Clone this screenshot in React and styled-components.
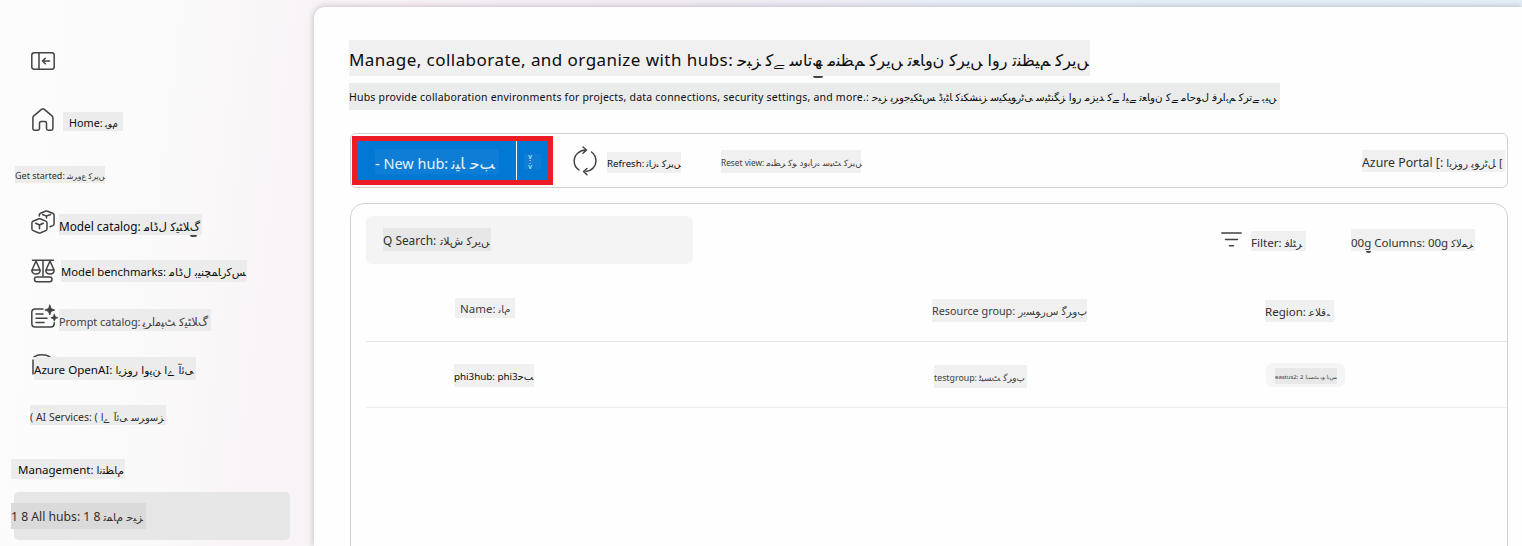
import React from "react";
import styled, { createGlobalStyle } from "styled-components";

const GlobalStyle = createGlobalStyle`
  * { box-sizing: border-box; }
  html, body { margin: 0; height: 546px; overflow: hidden; }
  body { font-family: "Noto Sans", "DejaVu Sans", sans-serif; color: #0c0c0c; }
`;

/* Contextual letter forms: isolated, final, initial, medial */
const FORMS = {
  "ا": "\uFE8D\uFE8E", "آ": "\uFE81\uFE82", "ب": "\uFE8F\uFE90\uFE91\uFE92",
  "پ": "\uFB56\uFB57\uFB58\uFB59", "ت": "\uFE95\uFE96\uFE97\uFE98",
  "ٹ": "\uFB66\uFB67\uFB68\uFB69", "ج": "\uFE9D\uFE9E\uFE9F\uFEA0",
  "چ": "\uFB7A\uFB7B\uFB7C\uFB7D", "ح": "\uFEA1\uFEA2\uFEA3\uFEA4",
  "د": "\uFEA9\uFEAA", "ڈ": "\uFB88\uFB89", "ر": "\uFEAD\uFEAE",
  "ز": "\uFEAF\uFEB0", "س": "\uFEB1\uFEB2\uFEB3\uFEB4",
  "ش": "\uFEB5\uFEB6\uFEB7\uFEB8", "ظ": "\uFEC5\uFEC6\uFEC7\uFEC8",
  "ع": "\uFEC9\uFECA\uFECB\uFECC", "ف": "\uFED1\uFED2\uFED3\uFED4",
  "ق": "\uFED5\uFED6\uFED7\uFED8", "ک": "\uFB8E\uFB8F\uFB90\uFB91",
  "گ": "\uFB92\uFB93\uFB94\uFB95", "ل": "\uFEDD\uFEDE\uFEDF\uFEE0",
  "م": "\uFEE1\uFEE2\uFEE3\uFEE4", "ن": "\uFEE5\uFEE6\uFEE7\uFEE8",
  "ں": "\uFB9E\uFB9F", "و": "\uFEED\uFEEE", "ہ": "\uFBA6\uFBA7\uFBA8\uFBA9",
  "ھ": "\uFBAA\uFBAB\uFBAC\uFBAD", "ی": "\uFBFC\uFBFD\uFBFE\uFBFF",
  "ئ": "\uFE89\uFE8A\uFE8B\uFE8C", "ے": "\uFBAE\uFBAF",
};

function shape(text) {
  let out = "";
  for (let i = 0; i < text.length; i++) {
    const f = FORMS[text[i]];
    if (!f) { out += text[i]; continue; }
    const prev = FORMS[text[i - 1]];
    const joined = !!prev && prev.length === 4;
    if (text[i] === "ل" && text[i + 1] === "ا") {
      out += joined ? "\uFEFC" : "\uFEFB";
      i++;
      continue;
    }
    const joinsNext = f.length === 4 && !!FORMS[text[i + 1]];
    out += f[joined ? (joinsNext ? 3 : 1) : joinsNext ? 2 : 0];
  }
  return out;
}

const Page = styled.div`
  display: flex;
  width: 1522px;
  height: 546px;
  overflow: hidden;
  background:
    linear-gradient(90deg, rgba(247, 240, 245, 0) 290px, #f7f0f5 420px, #f0ecf4 760px, #e6eff8 1000px, #e4eef8 100%) top / 100% 14px no-repeat,
    linear-gradient(97deg, #fcfcfc 0, #fbfbfb 130px, #faf8f9 230px, #f8f3f7 320px, #f8f3f7 100%);
`;
const Sidebar = styled.nav`
  flex: 0 0 314px;
  display: flex;
  flex-direction: column;
  align-items: flex-start;
`;
const NavRow = styled.div`
  display: flex;
  align-items: flex-start;
  flex: 0 0 auto;
  height: ${(p) => p.$h}px;
  padding-left: ${(p) => p.$x}px;
`;
const ActiveRow = styled.div`
  display: flex;
  align-items: flex-start;
  width: 276px;
  height: 48px;
  margin-left: 14px;
  padding-top: 11px;
  border-radius: 5px;
  background: #e6e6e6;
`;
const Main = styled.main`
  flex: 1;
  margin-top: 7px;
  padding: 33px 14px 0 35px;
  border-radius: 11px 0 0 0;
  background: #fefefe;
  box-shadow: 0 0 6px rgba(60, 40, 60, 0.3);
`;
const Box = styled.span`
  position: relative;
  display: flex;
  flex: 0 0 auto;
  align-items: baseline;
  width: ${(p) => p.$w}px;
  height: ${(p) => p.$h}px;
  margin-top: ${(p) => p.$mt || 0}px;
  margin-left: ${(p) => p.$ml || 0}px;
  padding-left: ${(p) => p.$pl || 0}px;
  line-height: ${(p) => p.$lh || p.$h}px;
  white-space: pre;
  color: ${(p) => p.$color || "#0c0c0c"};
  background: ${(p) => p.$bg || "#ececec"};
`;
const Latin = styled.span`
  font-size: ${(p) => p.$size}px;
  letter-spacing: ${(p) => p.$ls || 0}px;
`;
const Urdu = styled.bdo`
  margin-left: ${(p) => p.$gap ?? 3}px;
  font-family: "DejaVu Sans", sans-serif;
  font-size: ${(p) => p.$size}px;
`;
/* Dark sliver of an icon or glyph showing under a label's edge */
const Sliver = styled.i`
  position: absolute;
  left: ${(p) => p.$x}px;
  bottom: -2px;
  width: ${(p) => p.$w}px;
  height: 2px;
  border-radius: 0 0 5px 5px;
  background: #444;
`;
function Label({ en, ur, size, us, ls, gap, sliver, ...box }) {
  return (
    <Box {...box}>
      <Latin $size={size} $ls={ls}>{en}</Latin>
      {ur && <Urdu dir="ltr" lang="ur" $size={us} $gap={gap}>{shape(ur)}</Urdu>}
      {sliver && <Sliver $x={sliver[0]} $w={sliver[1]} />}
    </Box>
  );
}
const Title = styled.h1`
  margin: 0;
  height: 43px;
  font-weight: 400;
`;
const Subtitle = styled.p`
  margin: 0;
  height: 50px;
`;
const Toolbar = styled.div`
  display: flex;
  align-items: flex-start;
  width: 1158px;
  height: 55px;
  margin-left: 1px;
  padding: 2px 0 0 1px;
  border: 1px solid #d1d1d1;
  border-radius: 6px;
`;
const SplitButton = styled.div`
  display: flex;
  width: 201px;
  height: 49px;
  border: 5px solid #ed1c24;
  background: #0078d4;
`;
const ButtonMain = styled.div`
  width: 160px;
  padding: 8px 0 0 18px;
  border-right: 1px solid #fff;
`;
const ButtonMenu = styled.div`
  display: flex;
  flex: 1;
  padding: 13px 0 0 7px;
`;
const MenuMark = styled.div`
  display: flex;
  flex-direction: column;
  align-items: center;
  width: 17px;
  height: 15px;
  font-size: 7px;
  line-height: 5px;
  padding-right: 5px;
  color: #e4f1fb;
  background: #0e7dd6;
`;
const Panel = styled.section`
  width: 1158px;
  height: 380px;
  margin: 15px 0 0 1px;
  padding: 12px 0 0 15px;
  border: 1px solid #d1d1d1;
  border-radius: 14px;
`;
const PanelTools = styled.div`
  display: flex;
  height: 66px;
`;
const SearchField = styled.div`
  width: 327px;
  height: 48px;
  padding: 12px 0 0 17px;
  border-radius: 6px;
  background: #f4f4f4;
`;
const TableRow = styled.div`
  display: grid;
  grid-template-columns: 566px 333px 1fr;
  height: ${(p) => p.$h}px;
  border-bottom: 1px solid ${(p) => p.$line};
`;
const Pill = styled.div`
  width: 79px;
  height: 24px;
  margin: 21px 0 0 1px;
  padding: 5px 0 0 9px;
  border-radius: 7px;
  background: #f5f5f5;
`;
const Icon = styled.svg`
  flex: 0 0 auto;
  display: block;
  overflow: visible;
  margin-top: ${(p) => p.$mt || 0}px;
  margin-left: ${(p) => p.$ml || 0}px;
  fill: none;
  stroke: #424242;
  stroke-width: 1.5;
  stroke-linecap: round;
  stroke-linejoin: round;
`;

export default function App() {
  return (
    <>
      <GlobalStyle />
      <Page>
        <Sidebar>
          <NavRow $h={108} $x={31}>
            <Icon $mt={52} width="24" height="18" viewBox="0 0 24 18">
              <rect x="0.8" y="0.8" width="22.4" height="16.4" rx="2.4" />
              <path d="M8 1v16M18.5 9h-7M14.3 6.2L11.5 9l2.8 2.8" />
            </Icon>
          </NavRow>
          <NavRow $h={58} $x={32}>
            <Icon width="22" height="23" viewBox="0 0 22 23">
              <path d="M.9 9.8c0-.8.3-1.4.9-1.9l8-6.8c.7-.5 1.500-.5 2.200 0l8 6.800c.6.5.9 1.100.9 1.900v10.700c0 1-.7 1.700-1.700 1.700h-3c-1 0-1.700-.7-1.700-1.700v-5.200c0-1-.7-1.700-1.700-1.700H9.200c-1 0-1.700.7-1.700 1.700v5.200c0 1-.7 1.700-1.700 1.700h-3.200c-1 0-1.700-.7-1.700-1.700z" />
            </Icon>
            <Label en="Home:" ur="ہوم" size={10.8} us={9} gap={2} $w={60} $h={19} $mt={4} $ml={9} $pl={6} $lh={21} />
          </NavRow>
          <NavRow $h={44} $x={15}>
            <Label en="Get started:" ur="شروع کریں" size={9} us={7.8} gap={2} $w={90} $h={17} $lh={19} $color="#303030" />
          </NavRow>
          <NavRow $h={49} $x={31}>
            <Icon width="24" height="24" viewBox="0 0 24 24">
              <path d="M8.300 6V5c0-.9.4-1.400 1.200-1.700l4.800-2c.8-.3 1.500-.3 2.300 0l5 2c.9.4 1.500 1 1.500 1.900v8.600c0 .9-.5 1.500-1.300 1.800l-2.800 1.200M11.500 4.500l4 1.600 4-1.600M15.500 6.100V8M2 11.200l5.300-2.200c.8-.3 1.600-.3 2.400 0l5 2.100c.8.4 1.300.9 1.300 1.800v5.900c0 .9-.4 1.500-1.200 1.800l-5.100 2.200c-.8.300-1.600.3-2.400 0l-5.200-2.200C1.300 20.300.9 19.700.9 18.800v-5.900c0-.8.4-1.400 1.100-1.700zM4.700 13.300l3.800 1.700 3.800-1.700M8.500 15v3.800" />
            </Icon>
            <Label en="Model catalog:" ur="ماڈل کیٹلاگ" size={11.800} us={11.5} $w={143} $h={21} $mt={4} $ml={4} $lh={24} sliver={[131, 7]} />
          </NavRow>
          <NavRow $h={46} $x={31}>
            <Icon width="24" height="24" viewBox="0 0 24 24">
              <path d="M1.500 1.200h21M12 1.200V17M5 2L1 11M5 2l4 9M19 2l-4 9M19 2l4 9M.8 11h8.400c0 2.500-1.800 4-4.200 4S.8 13.500.8 11zM14.800 11h8.400c0 2.500-1.800 4-4.200 4s-4.200-1.500-4.200-4z" />
              <rect x="3.500" y="18" width="17.500" height="4.800" rx="2.200" />
            </Icon>
            <Label en="Model benchmarks:" ur="ماڈل بینچمارکس" size={11.300} us={11} $w={186} $h={22} $mt={1} $ml={6} $lh={24} />
          </NavRow>
          <NavRow $h={49} $x={31}>
            <Icon width="26" height="23" viewBox="0 0 26 23">
              <path d="M12 4H4C2 4 .8 5.300.8 7.200v11C.8 20.700 2 22 4 22h16c2 0 3.200-1.300 3.200-3.200v-1M5 9h7M5 13.200h11M5 17.400h8" />
              <path fill="#424242" strokeWidth="0.800" d="M18.800 0l1.400 3.600 3.600 1.400-3.600 1.400-1.400 3.600-1.400-3.600L13.800 5l3.600-1.400zM23.300 9.200l1 2.500 2.500 1-2.500 1-1 2.500-1-2.500-2.500-1 2.500-1z" />
            </Icon>
            <Label en="Prompt catalog:" ur="پرامپٹ کیٹلاگ" size={10.900} us={11.3} gap={2} $w={152} $h={22} $mt={4} $ml={2} $lh={26} $color="#404040" />
          </NavRow>
          <NavRow $h={51} $x={32}>
            <Icon width="22" height="22" viewBox="0 0 22 22">
              <path d="M1 20V6M2 2.800C4 1.500 6 .8 9.500.8S16 1.500 18 2.800" />
            </Icon>
            <Label en="Azure OpenAI:" ur="ایزور اوپن اے آئی" size={11.600} us={10.800} $w={162} $h={23} $mt={3} $ml={-20} $pl={0} $lh={25} />
          </NavRow>
          <NavRow $h={54} $x={30}>
            <Label en="( AI Services: (" ur="اے آئی سروسز" size={10.500} us={10.1} $w={136} $h={20} $lh={24} $color="#303030" />
          </NavRow>
          <NavRow $h={33} $x={11}>
            <Label en="Management:" ur="انتظام" size={11.500} us={10.500} $w={114} $h={20} $pl={7} $lh={21} />
          </NavRow>
          <ActiveRow>
            <Label en="1 8 All hubs: 1 8" ur="تمام حبز" size={12.200} us={11} $w={135} $h={26} $ml={-3} $lh={28} $bg="#dadada" $color="#303030" />
          </ActiveRow>
        </Sidebar>
        <Main>
          <Title>
            <Label en="Manage, collaborate, and organize with hubs:" ur="حبز کے ساتھ منظم کریں تعاون کریں اور تنظیم کریں" size={17} ls={0.45} us={16} gap={4} $w={741} $h={36} $lh={40} $bg="#f0f0f0" sliver={[464, 10]} />
          </Title>
          <Subtitle>
            <Label en="Hubs provide collaboration environments for projects, data connections, security settings, and more.:" ur="حبز پروجیکٹس ڈیٹا کنکشنز سیکیورٹی سیٹنگز اور مزید کے لیے تعاون کے ماحول فراہم کرتے ہیں" size={10.500} ls={0.21} us={10.300} $w={931} $h={27} $lh={29} $bg="#eaecec" />
          </Subtitle>
          <Toolbar>
            <SplitButton>
              <ButtonMain>
                <Label en="- New hub:" ur="نیا حب" size={14.500} us={15.500} $w={124} $h={25} $lh={29} $bg="#0e7dd6" $color="#e8f3fc" />
              </ButtonMain>
              <ButtonMenu><MenuMark><span>v</span><span>:</span><span>v</span></MenuMark></ButtonMenu>
            </SplitButton>
            <Icon $ml={20} $mt={11} width="24" height="28" viewBox="0 0 24 28">
              <path d="M13 24.500c5.500-.5 10-5 10-10.500 0-3.800-1.800-7-4.500-9M13 3C6.500 3 1.200 8 1.200 14c0 3.800 1.800 7 4.800 9M10 0l3.500 3L10 6.200M14 21.500l-3.500 3 3.500 3.200" />
            </Icon>
            <Label en="Refresh:" ur="تازہ کریں" size={9.700} us={9.1} gap={2} $w={74} $h={21} $mt={16} $ml={10} $lh={24} $bg="#f0f0f0" />
            <Label en="Reset view:" ur="منظر کو دوبارہ سیٹ کریں" size={8.300} us={8.700} gap={2} $w={140} $h={23} $mt={14} $ml={40} $lh={26} $bg="#f0f0f0" $color="#404040" />
            <Label en="Azure Portal [:" ur="ایزور پورٹل [" size={12.300} us={10.500} $w={143} $h={22} $mt={14} $ml={501} $lh={26} $bg="#f0f0f0" $color="#303030" />
          </Toolbar>
          <Panel>
            <PanelTools>
              <SearchField>
                <Label en="Q Search:" ur="تلاش کریں" size={11.900} us={11} gap={4} $w={108} $h={23} $lh={25} $bg="#e7e7e7" $color="#303030" />
              </SearchField>
              <Icon $ml={528} $mt={16} width="21" height="15" viewBox="0 0 21 15">
                <path d="M.8 1h19.400M4.500 7.500h12M8.500 13.800h4" />
              </Icon>
              <Label en="Filter:" ur="فلٹر" size={11.600} us={10.400} $w={55} $h={20} $mt={15} $ml={9} $lh={24} $bg="#f0f0f0" $color="#303030" />
              <Label en="00g Columns: 00g" ur="کالمز" size={11.500} us={10} $w={124} $h={22} $mt={13} $ml={45} $lh={27} $bg="#f0f0f0" $color="#303030" sliver={[15, 5]} />
            </PanelTools>
            <TableRow $h={60} $line="#e4e4e4">
              <Label en="Name:" ur="نام" size={11.500} us={10} $w={60} $h={20} $mt={16} $ml={89} $pl={5} $lh={22} $bg="#f0f0f0" $color="#404040" />
              <Label en="Resource group:" ur="ریسورس گروپ" size={10.800} us={10.400} $w={155} $h={23} $mt={17} $lh={23} $bg="#f0f0f0" $color="#404040" />
              <Label en="Region:" ur="علاقہ" size={11.500} us={10.300} $w={69} $h={22} $mt={18} $lh={23} $bg="#eff1f0" $color="#303030" />
            </TableRow>
            <TableRow $h={66} $line="#eeeeee">
              <Label en="phi3hub: phi3" ur="حب" size={9.800} us={9.800} gap={0} $w={80} $h={23} $mt={22} $ml={88} $lh={26} $bg="#f0f0f0" />
              <Label en="testgroup:" ur="ٹیسٹ گروپ" size={8.800} us={8.800} gap={2} $w={93} $h={23} $mt={23} $ml={2} $lh={26} $bg="#f0f0f0" $color="#404040" />
              <Pill>
                <Label en="eastus2: 2" ur="ایسٹ یو ایس" size={6} us={5.500} gap={2} $w={62} $h={16} $lh={18} $bg="#e8e8e8" $color="#404040" />
              </Pill>
            </TableRow>
          </Panel>
        </Main>
      </Page>
    </>
  );
}
